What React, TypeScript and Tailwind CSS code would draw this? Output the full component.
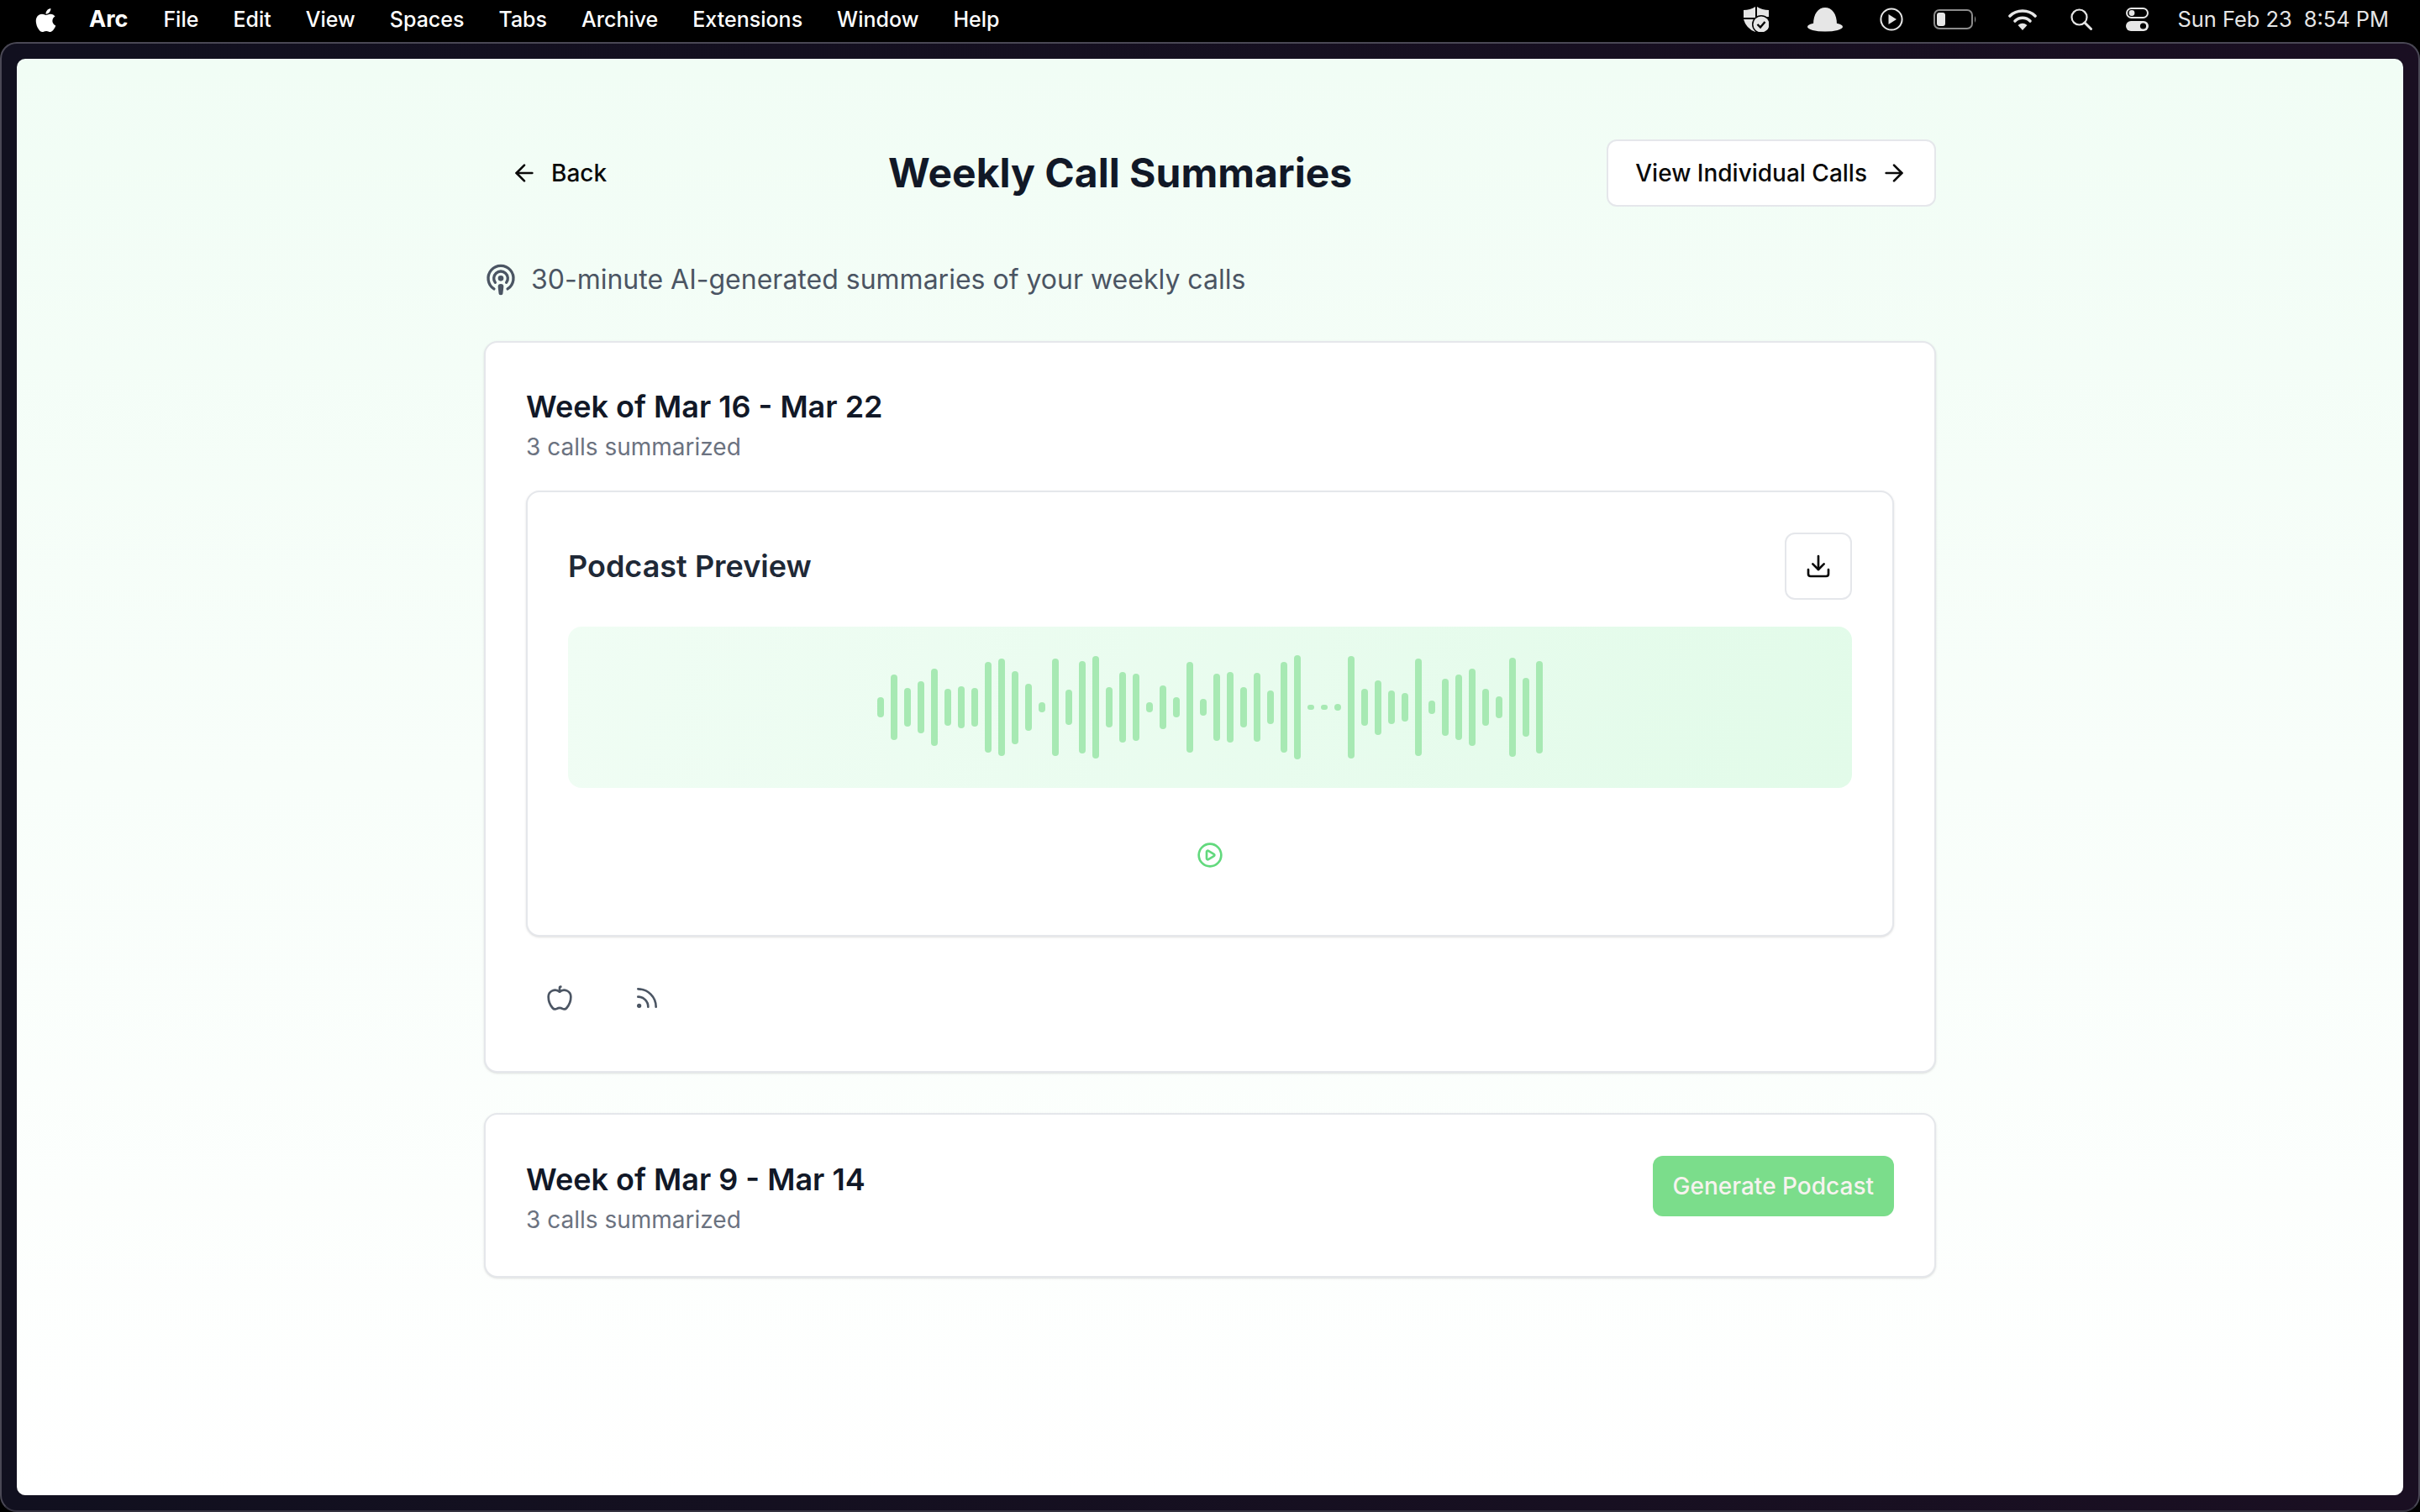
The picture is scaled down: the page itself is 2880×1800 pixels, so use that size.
import { Apple, ArrowLeft, ArrowRight, CirclePlay, Download, Podcast, Rss } from 'lucide-react'
import { FaApple } from 'react-icons/fa'

const menuItems = ['File', 'Edit', 'View', 'Spaces', 'Tabs', 'Archive', 'Extensions', 'Window', 'Help']

const bars = [
  24, 78, 46, 62, 92, 44, 50, 46, 108, 116, 87, 56, 12, 116, 42, 110, 122, 48, 84, 80, 12, 52, 24, 108, 20,
  80, 84, 48, 82, 40, 108, 124, 6, 6, 8, 122, 44, 65, 40, 34, 116, 16, 68, 78, 92, 44, 26, 118, 70, 110,
]

function StatusIcons() {
  return (
    <div className="flex items-center text-[#e6e6e6]">
      {/* shield */}
      <svg width="30" height="30" viewBox="0 0 30 30" className="mr-[46px]">
        <path d="M14 0 L14 13 L0 13 L0 4 Q8 4 14 0Z" fill="currentColor" />
        <path d="M16 0 Q22 4 30 4 L30 12 Q24 12 20 14 L16 16Z" fill="currentColor" />
        <path d="M0 15 L14 15 L14 30 Q3 26 0 15Z" fill="currentColor" />
        <circle cx="21" cy="21" r="11" fill="#000" />
        <circle cx="21" cy="21" r="9.5" fill="currentColor" />
        <path d="M16.5 21 L20 24.5 L25.5 18" fill="none" stroke="#000" strokeWidth="2.4" />
      </svg>
      {/* hat */}
      <svg width="42" height="30" viewBox="0 0 42 30" className="mr-[44px]">
        <path d="M7 21 C7 8 13 1 21 1 C29 1 35 8 35 21Z" fill="currentColor" />
        <ellipse cx="21" cy="24" rx="21" ry="5.5" fill="currentColor" />
      </svg>
      {/* play */}
      <svg width="28" height="28" viewBox="0 0 28 28" className="mr-[36px]">
        <circle cx="14" cy="14" r="12.6" fill="none" stroke="currentColor" strokeWidth="2" />
        <path d="M10.5 8 L20 14 L10.5 20Z" fill="currentColor" />
      </svg>
      {/* battery */}
      <svg width="52" height="24" viewBox="0 0 52 24" className="mr-[37px]">
        <rect x="1" y="1" width="45" height="22" rx="6" fill="none" stroke="#8c8c8c" strokeWidth="2" />
        <rect x="4" y="4" width="10" height="16" rx="3" fill="currentColor" />
        <path d="M49 8 Q51.5 12 49 16Z" fill="#8c8c8c" />
      </svg>
      {/* wifi */}
      <svg width="34" height="26" viewBox="0 0 34 26" className="mr-[40px]">
        <path d="M2 9 C10 1 24 1 32 9" fill="none" stroke="currentColor" strokeWidth="3.6" strokeLinecap="round" />
        <path d="M8 15 C13 10 21 10 26 15" fill="none" stroke="currentColor" strokeWidth="3.6" strokeLinecap="round" />
        <path d="M11.5 20 Q17 15.5 22.5 20 L17 26Z" fill="currentColor" />
      </svg>
      {/* search */}
      <svg width="26" height="26" viewBox="0 0 26 26" className="mr-[40px]">
        <circle cx="10.5" cy="10.5" r="9" fill="none" stroke="currentColor" strokeWidth="2.2" />
        <path d="M17 17 L24.5 24.5" stroke="currentColor" strokeWidth="3" strokeLinecap="round" />
      </svg>
      {/* control centre */}
      <svg width="28" height="28" viewBox="0 0 28 28" className="mr-[33px]">
        <rect x="1" y="1" width="25" height="11" rx="5.5" fill="none" stroke="currentColor" strokeWidth="2" />
        <circle cx="7" cy="6.5" r="3.4" fill="currentColor" />
        <rect x="0" y="16" width="27" height="12" rx="6" fill="currentColor" />
        <circle cx="20.5" cy="22" r="3.6" fill="#000" />
      </svg>
      <span className="text-[25.4px] whitespace-pre">Sun Feb 23  8:54 PM</span>
    </div>
  )
}

function MenuBar() {
  return (
    <div className="flex h-[50px] items-center justify-between bg-black pb-[3px] pl-[40px] pr-[37px] text-white">
      <div className="flex items-center">
        <FaApple className="mr-[37px] h-[32px] w-[29px]" />
        <span className="mr-[42px] text-[27px] font-bold">Arc</span>
        <div className="flex items-center gap-[41px] text-[25px] font-medium">
          {menuItems.map((item) => (
            <span key={item}>{item}</span>
          ))}
        </div>
      </div>
      <StatusIcons />
    </div>
  )
}

function WeekHeading({ title }: { title: string }) {
  return (
    <div>
      <h3 className="text-[36px] leading-[56px] font-semibold text-[#111827]">{title}</h3>
      <p className="text-[28px] leading-[40px] text-[#6b7280]">3 calls summarized</p>
    </div>
  )
}

export default function App() {
  return (
    <div className="h-[1800px] w-[2880px] overflow-hidden bg-black font-['Inter',sans-serif]">
      <MenuBar />
      <div className="h-[1750px] rounded-t-[20px] rounded-b-[20px] border-2 border-[#4a4855] border-b-[#34323f] bg-linear-to-r from-[#11101f] to-[#1a0f22] px-[18px] pt-[18px]">
        <div className="h-[1710px] rounded-[10px] bg-linear-to-b from-[#f1fdf5] to-white pt-[96px]">
          <div className="mx-auto w-[1728px]">
            {/* Header */}
            <div className="flex items-center justify-between">
              <button className="flex h-[80px] items-center gap-[16px] rounded-[12px] px-[32px] text-[28px] font-medium text-[#0a0a0a]">
                <ArrowLeft className="h-[32px] w-[32px]" strokeWidth={2} />
                Back
              </button>
              <h1 className="text-[48px] leading-[64px] font-bold text-[#111827]">Weekly Call Summaries</h1>
              <button className="flex h-[80px] items-center gap-[16px] rounded-[12px] border-2 border-[#e5e7eb] bg-white px-[32px] text-[28px] font-medium text-[#0a0a0a]">
                View Individual Calls
                <ArrowRight className="h-[32px] w-[32px]" strokeWidth={2} />
              </button>
            </div>

            <div className="mt-[59px] mb-[45px] flex h-[56px] items-center gap-[16px] text-[32px] text-[#4b5563]">
              <Podcast className="h-[40px] w-[40px]" strokeWidth={2} />
              <span>30-minute AI-generated summaries of your weekly calls</span>
            </div>

            {/* Current week */}
            <div className="rounded-[16px] border-2 border-[#e5e7eb] bg-white p-[48px] pb-[47px] shadow-sm">
              <WeekHeading title="Week of Mar 16 - Mar 22" />

              <div className="mt-[32px] rounded-[16px] border-2 border-[#e5e7eb] bg-white p-[48px] shadow-sm">
                <div className="flex items-center justify-between">
                  <h4 className="text-[36px] font-semibold text-[#1f2937]">Podcast Preview</h4>
                  <button className="flex h-[80px] w-[80px] items-center justify-center rounded-[12px] border-2 border-[#e5e7eb] bg-white text-[#0a0a0a]">
                    <Download className="h-[32px] w-[32px]" strokeWidth={2} />
                  </button>
                </div>

                <div className="mt-[32px] flex h-[192px] items-center justify-center gap-[8px] rounded-[16px] bg-linear-[105deg] from-[#f0fdf4] to-[#e2fbe9]">
                  {bars.map((h, i) => (
                    <div key={i} className="w-[8px] rounded-full bg-[#a7e9b3]" style={{ height: h }} />
                  ))}
                </div>

                <div className="mt-[64px] mb-[31px] flex justify-center">
                  <CirclePlay className="h-[32px] w-[32px] text-[#62d97d]" strokeWidth={2} />
                </div>
              </div>

              <div className="mt-[33px] flex gap-[24px]">
                <button className="flex h-[80px] w-[80px] items-center justify-center text-[#4b5563]">
                  <Apple className="h-[32px] w-[32px]" strokeWidth={2} />
                </button>
                <button className="flex h-[80px] w-[80px] items-center justify-center text-[#4b5563]">
                  <Rss className="h-[32px] w-[32px]" strokeWidth={2} />
                </button>
              </div>
            </div>

            {/* Previous week */}
            <div className="mt-[48px] flex items-start justify-between rounded-[16px] border-2 border-[#e5e7eb] bg-white px-[48px] pt-[49px] pb-[47px] shadow-sm">
              <WeekHeading title="Week of Mar 9 - Mar 14" />
              <button className="flex h-[72px] items-center rounded-[12px] bg-[#7bdd8b] px-[24px] text-[28px] font-medium text-[#f7f3ef]">
                Generate Podcast
              </button>
            </div>
          </div>
        </div>
      </div>
    </div>
  )
}
